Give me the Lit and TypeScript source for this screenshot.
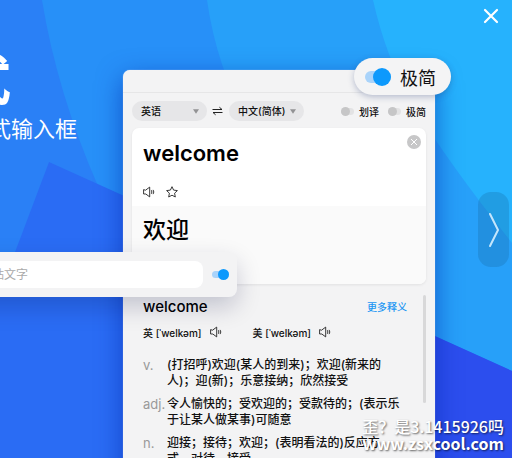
import { LitElement, html, css, svg } from "lit";
import { customElement, property } from "lit/decorators.js";

const speaker = () => html`<svg viewBox="0 0 12 12" width="12" height="12" aria-hidden="true"
  fill="none" stroke="#222" stroke-width="0.9" stroke-linejoin="round" stroke-linecap="round">
  <path d="M.6 4v4h2.2L6.7 10.9V1.1L2.8 4Z" />
  <path d="M8.6 4.6q.8 1.4 0 2.8M10.3 4.2q1.3 1.8 0 3.6" />
</svg>`;

@customElement("toggle-switch")
export class ToggleSwitch extends LitElement {
  @property() label = "";
  @property({ type: Boolean }) on = false;
  @property({ type: Boolean }) bare = false;
  @property({ reflect: true }) size = "small";

  static styles = css`
    :host { display: block; --track: 13px; --bar: 7px; --knob: 9px; --gap: 5px; font-size: 10px; }
    :host([size="medium"]) { --track: 17px; --bar: 7px; --knob: 11px; }
    :host([size="large"]) { --track: 26px; --bar: 12px; --knob: 18px; --gap: 9px; font-size: 18px; }
    label { display: flex; align-items: center; gap: var(--gap); white-space: nowrap; }
    input {
      appearance: none; margin: 0; width: var(--track); height: var(--knob);
      display: grid; align-items: center; cursor: pointer;
    }
    input::before, input::after { content: ""; grid-area: 1 / 1; border-radius: 20px; }
    input::before { height: var(--bar); background: #e3e3e4; }
    input::after { width: var(--knob); height: var(--knob); background: #c6c6c7; }
    input:checked::before { background: #a9d3fa; }
    input:checked::after { background: #0d99fc; justify-self: end; }
  `;

  render() {
    return html`<label>
      <input type="checkbox" role="switch" .checked=${this.on} aria-label=${this.label} />
      ${this.bare ? "" : html`<span>${this.label}</span>`}
    </label>`;
  }
}

interface Sense { pos: string; lines: string[]; }

const senses: Sense[] = [
  { pos: "v.", lines: ["(打招呼)欢迎(某人的到来)；欢迎(新来的", "人)；迎(新)；乐意接纳；欣然接受"] },
  { pos: "adj.", lines: ["令人愉快的；受欢迎的；受款待的；(表示乐", "于让某人做某事)可随意"] },
  { pos: "n.", lines: ["迎接；接待；欢迎；(表明看法的)反应方", "式，对待，接受"] },
];

@customElement("translate-window")
export class TranslateWindow extends LitElement {
  static styles = css`
    :host {
      display: block; background: #f3f3f4; color: #111; min-height: 100vh;
      border-radius: 7px 7px 0 0; font-weight: 500; font-size: 10px;
      box-shadow: 0 8px 26px rgba(0, 40, 170, 0.6), 0 0 1px #fff;
    }
    * { box-sizing: border-box; }
    button { background: none; border: 0; padding: 0; margin: 0; display: flex; cursor: pointer; }
    svg { display: block; }
    .titlebar { height: 23px; border-bottom: 1px solid #e6e6e7; }
    .tools { display: flex; align-items: center; padding: 8px 9px 7px; height: 35px; }
    .pick { display: grid; align-items: center; width: 75px; }
    .pick select, .pick svg { grid-area: 1 / 1; }
    .pick svg { justify-self: end; margin-right: 8px; pointer-events: none; }
    select {
      appearance: none; border: 0; width: 100%; height: 20px; border-radius: 10px;
      padding: 0 9px; background: #e6e6e8; color: #111; font: inherit;
    }
    .swap { margin: 0 6px 0 5px; }
    .switches { display: flex; gap: 9px; margin-left: auto; }
    .panel { margin: 0 9px; border-radius: 7px; background: #fff; overflow: hidden; box-shadow: 0 1px 3px rgba(0, 0, 0, 0.08); }
    .source { height: 78px; padding: 7px 5px 8px 11px; display: flex; flex-direction: column; justify-content: space-between; }
    .row { display: flex; align-items: flex-start; }
    .row input {
      flex: 1; min-width: 0; height: 36px; border: 0; padding: 0; background: none; color: #000;
      font: inherit; font-size: 22px; font-weight: 600; outline: 0;
    }
    .actions { display: flex; gap: 11px; align-items: center; }
    .result { height: 78px; padding: 7px 11px; background: #fafafa; font-size: 23px; line-height: 34px; color: #000; }
    .dict { display: flex; justify-content: space-between; padding: 11px 9px 0 20px; }
    .entry { flex: 1; min-width: 0; }
    .head { display: flex; justify-content: space-between; align-items: center; height: 22px; padding-right: 16px; }
    h2 { margin: 0; font-size: 15px; font-weight: 500; color: #000; }
    a { color: #2196f3; text-decoration: none; }
    .sounds { display: flex; gap: 31px; height: 16px; margin: 7px 0 17px; }
    .sound { display: flex; align-items: center; gap: 8px; }
    .senses { margin: 0; display: grid; grid-template-columns: 24px 1fr; row-gap: 7px; font-size: 12px; line-height: 16px; }
    dt { color: #999; font-weight: 400; font-size: 13px; }
    dd { margin: 0; white-space: nowrap; }
    .scroll { width: 3px; height: 108px; border-radius: 2px; background: #d8d8d9; }
  `;

  private picker(label: string, value: string) {
    return html`<div class="pick">
      <select aria-label=${label}><option>${value}</option></select>
      <svg viewBox="0 0 6 5" width="6" height="5" aria-hidden="true"><path d="M0 .3h6L3 4.8Z" fill="#929294" /></svg>
    </div>`;
  }

  render() {
    return html`
      <div class="titlebar"></div>
      <div class="tools">
        ${this.picker("源语言", "英语")}
        <button class="swap" aria-label="交换语言">
          <svg viewBox="0 0 11 10" width="11" height="10" fill="none" stroke="#222" stroke-width="1">
            <path d="M.5 3.5h9.5L7.4 1.2M10.5 6.5H1l2.6 2.3" />
          </svg>
        </button>
        ${this.picker("目标语言", "中文(简体)")}
        <div class="switches">
          <toggle-switch label="划译"></toggle-switch>
          <toggle-switch label="极简"></toggle-switch>
        </div>
      </div>
      <section class="panel">
        <div class="source">
          <div class="row">
            <input aria-label="原文" value="welcome" />
            <button aria-label="清空">
              <svg viewBox="0 0 14 14" width="14" height="14">
                <circle cx="7" cy="7" r="7" fill="#c7c7c8" />
                <path d="M4 4l6 6M10 4l-6 6" stroke="#fff" stroke-width="1" />
              </svg>
            </button>
          </div>
          <div class="actions">
            <button aria-label="朗读">${speaker()}</button>
            <button aria-label="收藏">
              <svg viewBox="0 0 12 12" width="12" height="12" fill="none" stroke="#222" stroke-width="0.9" stroke-linejoin="round">
                <path d="M6 .7l1.6 3.4 3.8.5-2.8 2.6.7 3.8L6 9.2 2.7 11l.7-3.8L.6 4.6l3.8-.5Z" />
              </svg>
            </button>
          </div>
        </div>
        <div class="result">欢迎</div>
      </section>
      <section class="dict">
        <div class="entry">
          <div class="head"><h2>welcome</h2><a href="#more">更多释义</a></div>
          <div class="sounds">
            ${["英", "美"].map((v) => html`<div class="sound">
              <span>${v} [ˈwelkəm]</span><button aria-label="${v}式发音">${speaker()}</button>
            </div>`)}
          </div>
          <dl class="senses">
            ${senses.map((s) => html`<dt>${s.pos}</dt><dd>${s.lines[0]}<br />${s.lines[1]}</dd>`)}
          </dl>
        </div>
        <div class="scroll"></div>
      </section>
    `;
  }
}

const backdrop = svg`
  <rect width="512" height="458" fill="#26b2fd" />
  <path d="M0 0H373Q386 58 412 103Q446 160 512 243V458H0Z" fill="#27a0f9" />
  <path d="M0 0H207Q216 65 250 130L330 320H0Z" fill="#2790f8" />
  <path d="M0 0H42Q57 92 98 186L140 300H0Z" fill="#2a80f6" />
  <path d="M49 162L512 371V458H0V292Z" fill="#2a6cf4" />
  <path d="M300 275L512 371V458H300Z" fill="#2c4eee" />`;

@customElement("app-root")
export class AppRoot extends LitElement {
  static styles = css`
    :host {
      display: grid; grid-template-columns: 123px minmax(0, 1fr) 77px; position: relative;
      height: 100vh; overflow: hidden; font-family: Inter, "Noto Sans CJK SC", sans-serif;
    }
    * { box-sizing: border-box; }
    button { border: 0; padding: 0; margin: 0; background: none; display: grid; place-items: center; cursor: pointer; }
    .backdrop { position: absolute; inset: 0; width: 100%; height: 100%; }
    .hero { position: relative; color: #fff; display: flex; flex-direction: column; align-items: flex-start; padding-top: 50px; }
    h1, .hero p { margin: 0; white-space: nowrap; }
    h1 { font-size: 52px; line-height: 64px; font-weight: 700; margin-left: -41px; }
    .hero p { font-size: 22px; line-height: 30px; font-weight: 400; margin-left: -11px; }
    .window { position: relative; padding-top: 70px; }
    .side { position: relative; display: flex; flex-direction: column; align-items: flex-end; padding: 8px 3px 0 0; }
    .close { width: 36px; height: 16px; }
    .next { margin-top: 168px; width: 31px; height: 75px; border-radius: 13px; background: rgba(20, 95, 150, 0.25); }
    .pill {
      position: absolute; top: 58px; right: 61px; width: 97px; height: 37px; padding-left: 11px;
      display: flex; align-items: center; border-radius: 19px; background: #f4f4f5; color: #111;
      box-shadow: 0 2px 6px rgba(40, 60, 120, 0.3);
    }
    .quick {
      position: absolute; top: 252px; left: -40px; width: 277px; height: 45px; padding: 9px 8px 9px 9px;
      display: flex; align-items: center; justify-content: space-between; border-radius: 8px;
      background: #f3f3f4; box-shadow: 0 10px 24px rgba(0, 10, 60, 0.2);
    }
    .quick input {
      width: 234px; height: 27px; border: 0; border-radius: 8px; padding: 0 11px;
      background: #fff; font: inherit; font-size: 12px;
    }
    .quick input::placeholder { color: #aaa; }
    .mark {
      position: absolute; right: 8px; bottom: 6px; text-align: right; color: #fff; font-weight: 500;
      font-family: "Noto Sans CJK SC", sans-serif; font-size: 16px; line-height: 17px; white-space: nowrap;
      text-shadow: 1px 1px 2px rgba(0, 0, 0, 0.6);
    }
    .site { font-weight: 700; }
  `;

  render() {
    return html`
      <svg class="backdrop" viewBox="0 0 512 458" preserveAspectRatio="none" aria-hidden="true">${backdrop}</svg>
      <header class="hero"><h1>式</h1><p>式输入框</p></header>
      <main class="window"><translate-window></translate-window></main>
      <nav class="side">
        <button class="close" aria-label="关闭">
          <svg viewBox="0 0 16 16" width="16" height="16"><path d="M2 2l12 12M14 2L2 14" stroke="#fff" stroke-width="2.2" stroke-linecap="round" /></svg>
        </button>
        <button class="next" aria-label="下一页">
          <svg viewBox="0 0 12 36" width="12" height="36"><path d="M2 2l8 16-8 16" fill="none" stroke="#c4e6fc" stroke-width="2" stroke-linecap="round" stroke-linejoin="round" /></svg>
        </button>
      </nav>
      <div class="pill"><toggle-switch size="large" label="极简" on></toggle-switch></div>
      <div class="quick">
        <input aria-label="输入文字" placeholder="粘贴文字" />
        <toggle-switch size="medium" label="极简模式" on bare></toggle-switch>
      </div>
      <div class="mark">歪？是3.1415926吗<br /><span class="site">www.zsxcool.com</span></div>
    `;
  }
}
